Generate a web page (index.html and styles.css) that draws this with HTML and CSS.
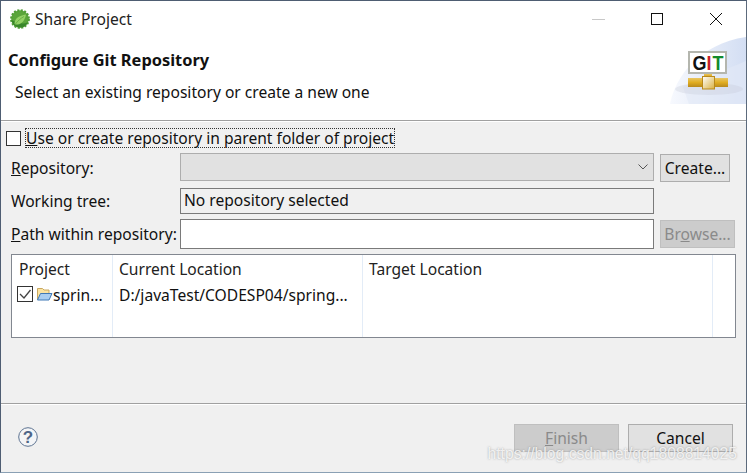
FILE: index.html
```html
<!DOCTYPE html>
<html lang="en">
<head>
  <meta charset="UTF-8">
  <title>Share Project</title>
  <link rel="stylesheet" href="styles.css">
</head>
<body>
  <div class="dialog">
    <div class="titlebar">
      <svg class="app-icon" width="20" height="20" viewBox="0 0 20 20">
        <circle cx="10" cy="10" r="8.800" fill="#5aa53a" stroke="#4f9c35" stroke-width="2.200" stroke-dasharray="2 1.500"/>
        <path d="M1.500 11a8.600 8.600 0 0 0 8.500 7.500c3.500 0 6.500-2 7.800-5-3 1-6 1.300-9 .3C6 13 3.500 12 1.500 11z" fill="#38862a"/>
        <path d="M4.500 15c0-5.500 4.500-8.500 11.500-9.500-1 5.500-4 9.500-8.500 10-1 .1-2.200 0-3-.5z" fill="#93d165"/>
        <path d="M5.500 15c2-3 5-5.500 8.500-7.500" fill="none" stroke="#5fa83f" stroke-width="0.800"/>
      </svg>
      <span class="title">Share Project</span>
      <div class="win-btns">
        <span class="win-min"></span>
        <svg width="14" height="14" viewBox="0 0 14 14"><rect x="1.500" y="1.500" width="11" height="11" fill="none" stroke="#111" stroke-width="1"/></svg>
        <svg width="14" height="14" viewBox="0 0 14 14"><path d="M1 1l12 12M13 1L1 13" fill="none" stroke="#111" stroke-width="1"/></svg>
      </div>
    </div>

    <div class="banner">
      <div class="banner-text">
        <h1>Configure Git Repository</h1>
        <p>Select an existing repository or create a new one</p>
      </div>
      <svg class="banner-art" width="77" height="68" viewBox="0 0 77 68">
        <defs>
          <linearGradient id="wash" x1="0" y1="0" x2="1" y2="0">
            <stop offset="0" stop-color="#f7f9fe"/>
            <stop offset="1" stop-color="#d3def3"/>
          </linearGradient>
          <linearGradient id="pipe" x1="0" y1="0" x2="0" y2="1">
            <stop offset="0" stop-color="#e8c664"/>
            <stop offset="0.5" stop-color="#e0ad22"/>
            <stop offset="1" stop-color="#b98a1c"/>
          </linearGradient>
          <linearGradient id="joint" x1="0" y1="0" x2="1" y2="1">
            <stop offset="0" stop-color="#ffffff"/>
            <stop offset="1" stop-color="#d9b040"/>
          </linearGradient>
        </defs>
        <path d="M1 67C6 40 30 7 77 0V67z" fill="url(#wash)"/>
        <path d="M14 50C30 40 55 34 77 24V67H20z" fill="#e3e9f7" opacity="0.6"/>
        <ellipse cx="40" cy="52" rx="34" ry="6" fill="#c4c8d4" opacity="0.3"/>
        <rect x="20" y="15" width="37" height="21" fill="#fff" stroke="#b4b6ae" stroke-width="2"/>
        <text x="23.500" y="33" class="git-g" textLength="14" lengthAdjust="spacingAndGlyphs">G</text>
        <text x="37.500" y="33" class="git-i" textLength="5" lengthAdjust="spacingAndGlyphs">I</text>
        <text x="43.500" y="33" class="git-t" textLength="11" lengthAdjust="spacingAndGlyphs">T</text>
        <rect x="35" y="37" width="8" height="4" fill="url(#pipe)"/>
        <rect x="19" y="41" width="40" height="9" fill="url(#pipe)"/>
        <rect x="33.500" y="39.500" width="12" height="12.500" fill="url(#joint)" stroke="#b98a1c"/>
      </svg>
    </div>

    <div class="content">
      <div class="check-row">
        <span class="checkbox"></span>
        <span class="focus-label"><u>U</u>se or create repository in parent folder of project</span>
      </div>

      <div class="form">
        <label><u>R</u>epository:</label>
        <div class="combo">
          <svg width="10" height="6" viewBox="0 0 10 6"><path d="M0.500 0.500L5 5 9.500 0.500" fill="none" stroke="#555" stroke-width="1"/></svg>
        </div>
        <button class="btn btn-create">Create...</button>

        <label>Working tree:</label>
        <div class="field field-tree">No repository selected</div>
        <span></span>

        <label><u>P</u>ath within repository:</label>
        <div class="field field-path"></div>
        <button class="btn btn-browse" disabled>Br<u>o</u>wse...</button>
      </div>

      <div class="table">
        <div class="cell col-project">Project</div>
        <div class="cell col-current">Current Location</div>
        <div class="cell col-target">Target Location</div>
        <div class="cell col-end"></div>

        <div class="cell cell-row col-project">
          <span class="row-check">
            <svg width="14" height="14" viewBox="0 0 14 14"><path d="M2 7L6 11 12.500 3" fill="none" stroke="#444" stroke-width="1.300"/></svg>
          </span>
          <svg class="folder" width="17" height="14" viewBox="0 0 17 14">
            <path d="M1.500 12.500V1.500h5l1.500 1.500h5v3.500" fill="#fbe3a0" stroke="#c9a860"/>
            <path d="M1.500 13L4.500 6.500H16L13 13z" fill="#a9cdf0" stroke="#3f78b5"/>
          </svg>
          <span>sprin...</span>
        </div>
        <div class="cell cell-row col-current">D:/javaTest/CODESP04/spring...</div>
        <div class="cell cell-row col-target"></div>
        <div class="cell cell-row col-end"></div>
      </div>
    </div>

    <div class="footer">
      <svg class="help" width="20" height="20" viewBox="0 0 20 20">
        <circle cx="10" cy="10" r="9.300" fill="#f4f5f7" stroke="#5d7391" stroke-width="1"/>
        <text x="10" y="16" class="help-mark">?</text>
      </svg>
      <div class="footer-btns">
        <button class="btn btn-wide btn-finish" disabled><u>F</u>inish</button>
        <button class="btn btn-wide btn-cancel">Cancel</button>
      </div>
    </div>

    <div class="watermark">https://blog.csdn.net/qq1808814025</div>
  </div>
</body>
</html>
```

FILE: styles.css
```css
* {
  box-sizing: border-box;
}

html, body {
  margin: 0;
  padding: 0;
}

body {
  width: 747px;
  height: 473px;
  overflow: hidden;
  font-family: "Noto Sans", "Open Sans", sans-serif;
  font-size: 15.600px;
  color: #111;
}

.dialog {
  position: relative;
  width: 747px;
  height: 473px;
  display: flex;
  flex-direction: column;
  background-color: #f0f0f0;
  border: 1px solid #4e5d72;
  border-right-color: #5c6a7c;
  border-bottom-color: #8aa0b4;
}

/* title bar */
.titlebar {
  height: 36px;
  flex: none;
  display: flex;
  align-items: center;
  padding-left: 9px;
  background-color: #fff;
}

.title {
  margin-left: 5px;
  color: #222;
}

.win-btns {
  margin-left: auto;
  display: flex;
  align-items: center;
}

.win-btns svg {
  margin-left: 45px;
}

.win-btns svg:last-child {
  margin-right: 23px;
  margin-left: 45px;
}

.win-min {
  width: 13px;
  height: 1px;
  background-color: #c8c8c8;
}

/* banner */
.banner {
  height: 84px;
  flex: none;
  display: flex;
  justify-content: space-between;
  background-color: #fff;
  border-bottom: 1px solid #a0a0a0;
}

.banner-text h1 {
  margin: 11px 0 0 7px;
  font-size: 16.400px;
  line-height: 24px;
  font-weight: 700;
  color: #111;
}

.banner-text p {
  margin: 9px 0 0 14px;
  line-height: 22px;
}

.banner-art {
  flex: none;
}

.git-g, .git-i, .git-t {
  font-family: "Liberation Sans", sans-serif;
  font-weight: 700;
  font-size: 20px;
}

.git-g { fill: #111; }
.git-i { fill: #c8202a; }
.git-t { fill: #138a2c; }

/* main area */
.content {
  flex: 1;
  display: flex;
  flex-direction: column;
  padding: 6px 10px 0 5px;
  border-top: 1px solid #fff;
}

.check-row {
  display: flex;
  align-items: center;
  height: 20px;
}

.checkbox {
  width: 15px;
  height: 15px;
  margin-right: 5px;
  background-color: #fff;
  border: 1px solid #333;
}

.focus-label {
  line-height: 18px;
  outline: 1px dotted #333;
  white-space: nowrap;
}

.form {
  display: grid;
  grid-template-columns: 163px 474px 1fr;
  column-gap: 6px;
  grid-template-rows: 29px 27px 30px;
  row-gap: 5px;
  margin-top: 5px;
  padding-left: 5px;
  align-items: center;
}

.form label {
  white-space: nowrap;
}

.combo {
  height: 28px;
  align-self: start;
  display: flex;
  align-items: center;
  justify-content: flex-end;
  padding-right: 5px;
  background-color: #e1e1e1;
  border: 1px solid #adadad;
}

.field {
  padding-left: 3px;
  border: 1px solid #7a7a7a;
  line-height: 22px;
}

.field-tree {
  height: 26px;
  align-self: end;
}

.field-path {
  height: 30px;
  background-color: #fff;
}

.btn {
  font-family: inherit;
  font-size: 15.600px;
  padding: 0;
  color: #111;
  background-color: #e1e1e1;
  border: 1px solid #adadad;
  text-align: center;
}

.btn:disabled {
  color: #8a8a8a;
  background-color: #cccccc;
  border-color: #bfbfbf;
}

.btn-create {
  width: 70px;
  height: 28px;
  align-self: end;
}

.btn-browse {
  width: 75px;
  height: 28px;
}

/* project table */
.table {
  display: grid;
  grid-template-columns: 101px 250px 350px 1fr;
  grid-template-rows: 30px 1fr;
  height: 84px;
  margin-top: 5px;
  margin-left: 5px;
  background-color: #fff;
  border: 1px solid #828790;
}

.cell {
  padding-left: 6px;
  line-height: 28px;
  white-space: nowrap;
  color: #222;
  border-right: 1px solid #e3ecf7;
}

.col-project {
  padding-left: 7px;
}

.col-end {
  border-right: none;
}

.cell-row {
  line-height: 20px;
  color: #111;
}

.cell-row.col-project {
  display: flex;
  align-items: flex-start;
  padding-left: 5px;
}

.row-check {
  width: 16px;
  height: 16px;
  display: flex;
  align-items: center;
  justify-content: center;
  margin-top: 1px;
  border: 1px solid #333;
  flex: none;
}

.folder {
  flex: none;
  margin: 2px 0 0 3px;
}

/* footer */
.footer {
  height: 69px;
  flex: none;
  display: flex;
  justify-content: space-between;
  padding: 20px 13px 0 17px;
  border-top: 1px solid #a0a0a0;
  box-shadow: inset 0 1px 0 #fff;
}

.help {
  margin-top: 3px;
}

.help-mark {
  font-family: "Liberation Sans", sans-serif;
  font-weight: 700;
  font-size: 17px;
  text-anchor: middle;
  fill: #4f6688;
}

.footer-btns {
  display: flex;
  column-gap: 9px;
}

.btn-wide {
  width: 105px;
  height: 28px;
}

/* blog watermark over the footer */
.watermark {
  position: absolute;
  right: 9px;
  bottom: 9px;
  font-family: "Liberation Sans", sans-serif;
  font-size: 15.700px;
  color: rgba(255, 255, 255, 0.8);
  text-shadow: 0 0 2px rgba(120, 120, 120, 0.7);
  white-space: nowrap;
}
```
